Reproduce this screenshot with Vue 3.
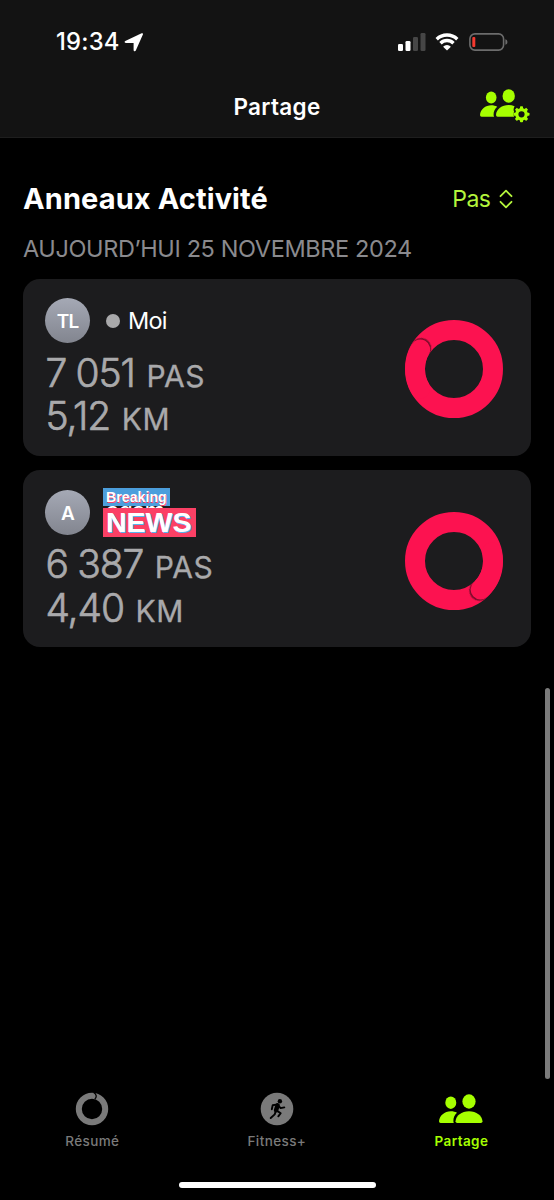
<script setup>
import { ref } from 'vue'

const title = ref('Anneaux Activité')
const activeTab = ref('partage')

const friends = [
  {
    id: 1,
    initials: 'TL',
    name: 'Moi',
    me: true,
    steps: '7 051',
    distance: '5,12',
    angle: 300,
  },
  {
    id: 2,
    initials: 'A',
    name: 'adam',
    me: false,
    steps: '6 387',
    distance: '4,40',
    angle: 137,
  },
]

const tabs = [
  { id: 'resume', label: 'Résumé' },
  { id: 'fitness', label: 'Fitness+' },
  { id: 'partage', label: 'Partage' },
]

const gearTeeth = [0, 45, 90, 135, 180, 225, 270, 315]
</script>

<template>
  <div class="screen">
    <header class="top">
      <div class="status">
        <span class="time">19:34</span>
        <svg class="location" width="20" height="20" viewBox="0 0 20 20">
          <path d="M1.3 9 17.6 1.3c1-.4 1.7.3 1.3 1.3L11.8 18.6c-.6 1.2-2.2.9-2.2-.5V10.900H2.100C.5 10.900.1 9.600 1.300 9z" />
        </svg>
        <svg class="signal" width="28" height="18" viewBox="0 0 28 18">
          <rect x="0" y="11" width="5" height="7" rx="1.3" />
          <rect x="7.5" y="8" width="5" height="10" rx="1.3" />
          <rect class="off" x="15" y="4" width="5" height="14" rx="1.3" />
          <rect class="off" x="22.5" y="0" width="5" height="18" rx="1.3" />
        </svg>
        <svg class="wifi" width="24" height="18" viewBox="0 0 24 18">
          <path class="wave" d="M1.7 6.2A14.8 14.8 0 0 1 22.3 6.2" />
          <path class="wave" d="M5.5 10.2A9.3 9.3 0 0 1 18.5 10.2" />
          <path class="dot" d="M12 17.6 8.1 13.7A5.6 5.6 0 0 1 15.9 13.7Z" />
        </svg>
        <svg class="battery" width="40" height="18" viewBox="0 0 40 18">
          <rect class="case" x=".9" y=".9" width="33.7" height="16.2" rx="5" />
          <rect class="level" x="3.3" y="4" width="3" height="10" rx="1" />
          <path class="nub" d="M36.4 6.2c1.5.4 2 1.6 2 2.8s-.5 2.4-2 2.8z" />
        </svg>
      </div>
      <div class="nav">
        <h1>Partage</h1>
        <svg class="manage" width="50" height="34" viewBox="0 0 50 34">
          <ellipse cx="11.2" cy="8.5" rx="5.3" ry="6" />
          <ellipse cx="28.7" cy="7" rx="6.2" ry="6.7" />
          <path d="M1.6 27.7Q0 27.7 0 26C.3 20.2 5.5 16.2 11.2 16.2c2.4 0 4.3.5 6 1.5-2.5 2.2-3.7 5-3.6 8 0 .8.1 1.5.5 2z" />
          <path d="M17.7 27.7Q16 27.7 16 26C16.3 20 22 16 28.7 16c2 0 4 .4 5.9 1.2-1.2 2-1.3 4-.5 5.6-.9 1.7-.8 3.4.1 4.9z" />
          <g transform="translate(41.5 25.3)">
            <circle class="gear" r="4.7" />
            <rect v-for="a in gearTeeth" :key="a" x="-1.5" y="-8" width="3" height="3.4" rx=".8" :transform="`rotate(${a})`" />
          </g>
        </svg>
      </div>
    </header>

    <main>
      <div class="heading">
        <h2>{{ title }}</h2>
        <button class="sort">
          <span>Pas</span>
          <svg width="14" height="20" viewBox="0 0 14 20">
            <path d="M1.5 7.2 7 1.7 12.5 7.2M1.5 12.8 7 18.3 12.5 12.8" />
          </svg>
        </button>
      </div>
      <p class="date">AUJOURD’HUI 25 NOVEMBRE 2024</p>

      <section class="cards">
        <article v-for="friend in friends" :key="friend.id" class="card">
          <div class="info">
            <div class="person">
              <span class="avatar">{{ friend.initials }}</span>
              <span v-if="friend.me" class="online"></span>
              <div class="name" :class="{ covered: !friend.me }">
                {{ friend.name }}
                <div v-if="!friend.me" class="sticker">
                  <span class="breaking">Breaking</span>
                  <span class="news">NEWS</span>
                </div>
              </div>
            </div>
            <p class="stat"><span class="value">{{ friend.steps }}</span><span class="unit">PAS</span></p>
            <p class="stat"><span class="value">{{ friend.distance }}</span><span class="unit">KM</span></p>
          </div>
          <svg class="ring" width="98" height="98" viewBox="-49 -49 98 98">
            <clipPath :id="`band-${friend.id}`">
              <path clip-rule="evenodd" d="M-49 0a49 49 0 1 0 98 0a49 49 0 1 0-98 0zM-29 0a29 29 0 1 0 58 0a29 29 0 1 0-58 0z" />
            </clipPath>
            <circle class="track" r="39" />
            <g :clip-path="`url(#band-${friend.id})`">
              <g :transform="`rotate(${friend.angle})`">
                <circle class="shade" cx="1.5" cy="-39" r="10.3" />
                <path class="track tip" d="M-33.77 -19.5A39 39 0 0 1 0 -39" />
              </g>
            </g>
          </svg>
        </article>
      </section>
    </main>

    <div class="scrollbar"></div>

    <nav class="tabs">
      <button v-for="tab in tabs" :key="tab.id" class="tab" :class="{ active: tab.id === activeTab }" @click="activeTab = tab.id">
        <svg v-if="tab.id === 'resume'" width="34" height="34" viewBox="-17 -17 34 34">
          <circle class="loop" r="13.2" />
          <path class="notch" d="M1.6-16.5C4.6-15 5-12 2.8-10" />
        </svg>
        <svg v-else-if="tab.id === 'fitness'" width="34" height="34" viewBox="-17 -17 34 34">
          <circle r="16.3" />
          <circle class="cut" cx="2.9" cy="-7.8" r="2.2" />
          <path class="torso" d="M.6-3.7-1 1.2" />
          <path class="limb" d="M-5.2.3-4.3-3.8.3-4.6 3.6-.9 7.3-1.6M.8-1.5-.2 1.6 3.7 4.2 1.3 7.3M-1.2 2-2.3 5.4-6.3 9" />
        </svg>
        <svg v-else width="44" height="34" viewBox="0 0 44 34">
          <ellipse cx="11.8" cy="10.7" rx="5.5" ry="6.2" />
          <ellipse cx="30" cy="9.5" rx="6.6" ry="7.2" />
          <path d="M1.6 31Q0 31 0 29.3C.5 23.5 5.5 19.2 11.8 19.2c2.4 0 4.5.5 6.2 1.5-2.5 2.2-3.7 5.2-3.6 8.3 0 .8.1 1.5.4 2z" />
          <path d="M18.2 31Q16.5 31 16.5 29.3C17 23.5 22.5 19.2 30 19.2S43 23.5 43.5 29.3Q43.5 31 41.8 31z" />
        </svg>
        <span>{{ tab.label }}</span>
      </button>
    </nav>
    <div class="home"></div>
  </div>
</template>

<style>
body {
  margin: 0;
  background: #000;
}
</style>

<style scoped>
.screen {
  position: relative;
  display: flex;
  flex-direction: column;
  width: 554px;
  height: 1200px;
  overflow: hidden;
  background: #000;
  color: #fff;
  font-family: Inter, "Liberation Sans", sans-serif;
}

h1, h2, p {
  margin: 0;
}

button {
  padding: 0;
  border: 0;
  background: none;
  font: inherit;
  color: inherit;
}

svg {
  display: block;
  flex: none;
  fill: currentColor;
}

.top {
  box-sizing: border-box;
  height: 138px;
  background: #131313;
  border-bottom: 1px solid #1e1e1e;
}

.status {
  display: flex;
  align-items: center;
  height: 83px;
  padding: 0 45px 0 56px;
}

.time {
  width: 68px;
  font-size: 23.8px;
  font-weight: 500;
  letter-spacing: 0.2px;
}

.signal {
  margin-left: auto;
}

.signal .off {
  fill: #464646;
}

.wifi {
  margin-left: 9.5px;
}

.wave {
  fill: none;
  stroke: #fff;
  stroke-width: 3.4;
}

.battery {
  margin-left: 10px;
}

.case {
  fill: none;
  stroke: #6c6c6c;
  stroke-width: 1.6;
}

.level {
  fill: #f5392f;
}

.nub {
  fill: #6c6c6c;
}

.nav {
  display: grid;
  grid-template-columns: 1fr auto 1fr;
  align-items: center;
  height: 48px;
  padding: 0 24px;
}

.nav h1 {
  grid-column: 2;
  margin-top: -2px;
  font-size: 22.5px;
  font-weight: 600;
  letter-spacing: 0.3px;
}

.manage {
  justify-self: end;
  margin-top: -2px;
  color: #a6ff00;
}

.gear {
  fill: none;
  stroke: currentColor;
  stroke-width: 3.2;
}

main {
  flex: 1;
  padding: 38px 23px 0;
}

.heading {
  display: flex;
  justify-content: space-between;
  align-items: center;
  height: 45px;
  padding-right: 18px;
}

.heading h2 {
  font-size: 29px;
  font-weight: 700;
  letter-spacing: 0.1px;
}

.sort {
  display: flex;
  align-items: center;
  gap: 8.5px;
  font-size: 23px;
  letter-spacing: -0.5px;
  color: #b4f53c;
}

.sort svg {
  fill: none;
  stroke: currentColor;
  stroke-width: 1.8;
  stroke-linecap: round;
  stroke-linejoin: round;
}

.date {
  height: 55px;
  line-height: 55px;
  font-size: 23.5px;
  letter-spacing: -0.38px;
  color: #8a8a8e;
  white-space: nowrap;
}

.cards {
  display: flex;
  flex-direction: column;
  gap: 14.5px;
  margin-top: 2.6px;
}

.card {
  display: flex;
  justify-content: space-between;
  align-items: center;
  box-sizing: border-box;
  height: 177px;
  padding: 0 28px 0 22px;
  border-radius: 17px;
  background: #1c1c1e;
}

.info {
  padding-top: 2px;
}

.person {
  display: flex;
  align-items: center;
  height: 45px;
  margin-bottom: 7.5px;
}

.avatar {
  width: 45px;
  height: 45px;
  border-radius: 50%;
  background: linear-gradient(#a5a9b5, #82858f);
  text-align: center;
  line-height: 47px;
  font-size: 19px;
  font-weight: 600;
  letter-spacing: -0.8px;
}

.online {
  width: 14px;
  height: 14px;
  margin: 0 8px 0 16px;
  border-radius: 50%;
  background: #a9a9ab;
}

.name {
  position: relative;
  font-size: 23.5px;
  line-height: 44px;
  letter-spacing: -0.8px;
}

.covered {
  margin: -2px 0 0 16px;
}

.sticker {
  position: absolute;
  top: -1.5px;
  left: -3px;
  display: flex;
  flex-direction: column;
  align-items: flex-start;
  gap: 2px;
  font-family: "Liberation Sans", sans-serif;
  font-weight: 700;
  letter-spacing: 0;
}

.breaking {
  padding: 0 3.5px 0 3px;
  background: #4c9edc;
  font-size: 14.2px;
  line-height: 18px;
  text-shadow: 0.5px 1px #fb4268;
}

.news {
  padding: 0 4px 0 3px;
  background: #fb4065;
  font-size: 28.5px;
  line-height: 29px;
  text-shadow: 1px 1px #55b4ef;
}

.stat {
  height: 43.5px;
  padding-left: 0.5px;
  line-height: 43.5px;
  white-space: nowrap;
  color: #a9a9ab;
}

.value {
  font-size: 39px;
  font-weight: 300;
  letter-spacing: -1.1px;
  word-spacing: -0.5px;
  -webkit-text-stroke: 0.7px #a9a9ab;
}

.unit {
  margin-left: 11.5px;
  font-size: 30px;
  font-weight: 400;
  letter-spacing: 0.6px;
  -webkit-text-stroke: 0.3px #a9a9ab;
}

.ring {
  margin-top: 4px;
}

.track {
  fill: none;
  stroke: #fc1250;
  stroke-width: 20;
}

.tip {
  stroke-linecap: round;
}

.shade {
  fill: #7d0c2b;
  filter: blur(0.7px);
}

.scrollbar {
  position: absolute;
  top: 688px;
  right: 4px;
  width: 5px;
  height: 391px;
  border-radius: 3px;
  background: #7b7b7b;
}

.tabs {
  display: grid;
  grid-template-columns: repeat(3, 184.6px);
  height: 90px;
}

.tab {
  display: flex;
  flex-direction: column;
  align-items: center;
  gap: 6px;
  font-size: 13.5px;
  line-height: 18px;
  font-weight: 500;
  letter-spacing: 0.4px;
  color: #7a7a7a;
}

.tab.active {
  font-weight: 600;
  color: #a6ff00;
}

.loop {
  fill: none;
  stroke: currentColor;
  stroke-width: 6;
}

.notch {
  fill: none;
  stroke: #000;
  stroke-width: 1.3;
}

.cut {
  fill: #000;
}

.torso {
  stroke: #000;
  stroke-width: 4.4;
  stroke-linecap: round;
}

.limb {
  fill: none;
  stroke: #000;
  stroke-width: 1.9;
  stroke-linecap: round;
  stroke-linejoin: round;
}

.home {
  width: 197px;
  height: 6px;
  margin: 0 auto 12px;
  border-radius: 3px;
  background: #fff;
}
</style>
